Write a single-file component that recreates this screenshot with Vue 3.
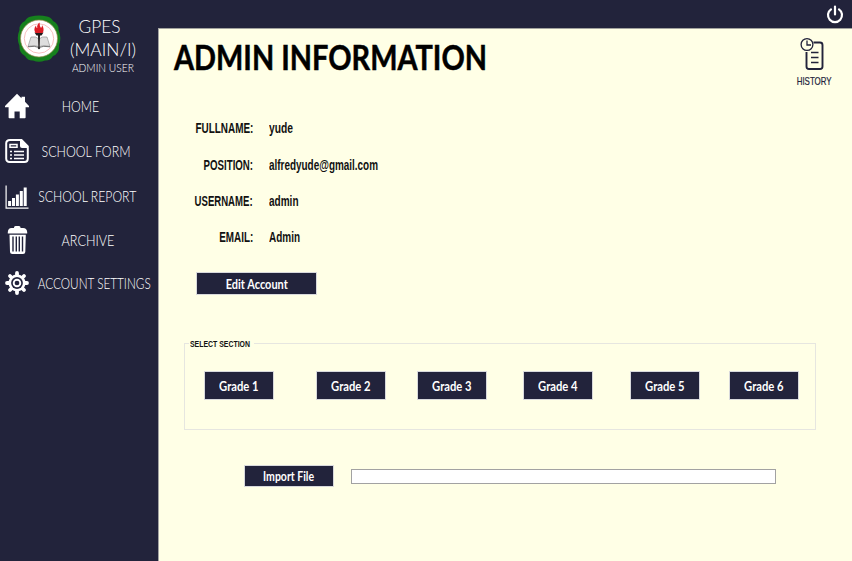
<script setup>
// Condenses or widens a label so that it fills the given width in pixels.
const vFit = {
  mounted(el, { value }) {
    const natural = el.getBoundingClientRect().width
    if (natural) el.style.transform = `scaleX(${value / natural})`
  }
}

const nav = [
  { id: 'home', label: 'HOME', width: 37.5 },
  { id: 'form', label: 'SCHOOL FORM', width: 89 },
  { id: 'report', label: 'SCHOOL REPORT', width: 98 },
  { id: 'archive', label: 'ARCHIVE', width: 53 },
  { id: 'settings', label: 'ACCOUNT SETTINGS', width: 113 }
]

const details = [
  { label: 'FULLNAME:', labelWidth: 58, value: 'yude', width: 24 },
  { label: 'POSITION:', labelWidth: 49.5, value: 'alfredyude@gmail.com', width: 109 },
  { label: 'USERNAME:', labelWidth: 58, value: 'admin', width: 29.5 },
  { label: 'EMAIL:', labelWidth: 34, value: 'Admin', width: 31 }
]

const grades = [1, 2, 3, 4, 5, 6]
</script>

<template>
  <div class="app">
    <aside class="sidebar">
      <header class="brand">
        <svg class="seal" viewBox="0 0 44 48">
          <path fill="#16801d" d="M14 1.500Q22-.5 30 1.500Q34 2 36 6Q42 9 41.500 15Q45 23 42 30Q43 38 36 41Q33 46 28 45.500Q22 48 16 45.500Q11 46 8 41Q2 38 2.500 31Q-1 23 2.500 15Q2 9 8 6Q10 2 14 1.500Z" />
          <circle cx="22" cy="23.500" r="18.500" fill="#fff" stroke="#9a8a4c" stroke-width=".7" />
          <circle cx="22" cy="23.500" r="14.700" fill="none" stroke="#f3a3a3" stroke-width=".7" />
          <path fill="#dedede" stroke="#777" stroke-width=".5" d="M14 22Q19 21 22 24Q25 21 30 22L33 31.500Q26 29.500 22 32Q18 29.500 11 31.500Z" />
          <path stroke="#555" stroke-width=".8" d="M11 31.800Q18 30.500 22 32.500Q26 30.500 33 31.800" fill="none" />
          <path fill="#211d1d" d="M17.500 17.500H26.500L24.500 20.500H23L22.600 33.500H21.400L21 20.500H19.500Z" />
          <path fill="#dc1d24" d="M18.500 18Q16 14 19 10.500Q19 13 20.300 13Q19.500 10 22.500 7.500Q22.500 11 24 13Q25.200 12 25 10Q28 14.500 25.500 18Z" />
          <circle cx="22" cy="33" r="1.200" fill="#333" />
        </svg>
        <div class="brand-text">
          <span v-fit="42" class="fit brand-name brand-short">GPES</span>
          <span v-fit="66" class="fit brand-name">(MAIN/I)</span>
          <span v-fit="62" class="fit brand-role">ADMIN USER</span>
        </div>
      </header>

      <nav class="nav">
        <a v-for="item in nav" :key="item.id" class="nav-item">
          <svg v-if="item.id === 'home'" class="nav-icon" viewBox="0 0 24 28" fill="#fff">
            <path d="M12 1.800L16.500 6.200V4.800H20V9.700L24 14V15.200H20.600V25.500Q20.600 26.300 19.800 26.300H14.700V19.500H9.500V26.300H4.400Q3.600 26.300 3.600 25.500V15.200H0V14Z" />
          </svg>
          <svg v-else-if="item.id === 'form'" class="nav-icon" viewBox="0 0 24 28" fill="none" stroke="#fff">
            <path stroke-width="2" d="M5 3H16.500L22.800 9.500V21.500Q22.800 25 19.300 25H4.700Q1.200 25 1.200 21.500V6.500Q1.200 3 5 3Z" />
            <path fill="#fff" stroke="none" d="M15 3H17L23 9V11H17Q15 11 15 9Z" />
            <path stroke-width="1.500" d="M5 10.300V7.500H12V10.300ZM9 14.500H19M9 18H19M9 21.500H19M5 14.500H7M5 18H7M5 21.500H7" />
          </svg>
          <svg v-else-if="item.id === 'report'" class="nav-icon" viewBox="0 0 24 28" fill="#fff">
            <path d="M.5 2.500H1.700V24.500H23.500V25.700H.5Z" />
            <path d="M3.100 18H6.100V23H3.100ZM7 15H10V23H7ZM10.900 11.500H13.900V23H10.900ZM14.800 8H17.800V23H14.800ZM18.700 4.500H21.700V23H18.700Z" />
          </svg>
          <svg v-else-if="item.id === 'archive'" class="nav-icon" viewBox="0 0 24 28" fill="#fff">
            <path d="M9 2V1.500Q9 0 10.500 0H14Q15.500 0 15.500 1.500V2H18Q21.800 2 22.200 6V7.500H2.800V6Q3.200 2 6.500 2Z" />
            <path fill-rule="evenodd" d="M4.500 8.700H20.800L20.300 26Q20.200 28 18 28H7.300Q5.200 28 5 26ZM7.300 10.500V25.500H8.700V10.500ZM10.600 10.500V25.500H12V10.500ZM13.600 10.500V25.500H15V10.500ZM16.800 10.500V25.500H18.200V10.500Z" />
          </svg>
          <svg v-else class="nav-icon" viewBox="0 0 24 28">
            <g stroke="#fff" stroke-width="3.800" stroke-linecap="round">
              <path d="M12 4V24M2 14H22M5 7L19 21M19 7L5 21" />
            </g>
            <circle cx="12" cy="14" r="8.500" fill="#fff" />
            <circle cx="12" cy="14" r="5.900" fill="#22233b" />
            <circle cx="12" cy="14" r="3.300" fill="none" stroke="#fff" stroke-width="1.900" />
          </svg>
          <span class="nav-label" :class="'nav-label-' + item.id">
            <span v-fit="item.width" class="fit">{{ item.label }}</span>
          </span>
        </a>
      </nav>
    </aside>

    <div class="content">
      <div class="topbar">
        <svg class="power" viewBox="0 0 18 20" fill="none" stroke="#fff" stroke-width="2.200" stroke-linecap="round">
          <path d="M9 1.500V9.500M5 4.300A7 7 0 1 0 13 4.300" />
        </svg>
      </div>

      <main class="main">
        <div class="heading">
          <h1 v-fit="313" class="fit title">ADMIN INFORMATION</h1>
          <button class="history">
            <svg class="history-icon" viewBox="0 0 24 34" fill="none" stroke="#22233b">
              <path stroke-width="1.900" d="M13.500 5.500H20Q22.500 5.500 22.500 8V29.500Q22.500 32 20 32H9Q6.500 32 6.500 29.500V15" />
              <circle cx="7" cy="7.500" r="5.900" stroke-width="1.300" />
              <path stroke-width="1.300" d="M7 3.500V8H11M11 15.500H18.500M11 20.500H18.500M11 25.500H18.500" />
            </svg>
            <span v-fit="35" class="fit">HISTORY</span>
          </button>
        </div>

        <dl class="details">
          <template v-for="row in details" :key="row.label">
            <dt><span v-fit="row.labelWidth" class="fit fit-right">{{ row.label }}</span></dt>
            <dd><span v-fit="row.width" class="fit fit-left">{{ row.value }}</span></dd>
          </template>
        </dl>

        <button class="btn btn-edit"><span v-fit="62" class="fit">Edit Account</span></button>

        <section class="sections">
          <h2 class="legend"><span v-fit="60" class="fit fit-left">SELECT SECTION</span></h2>
          <div class="grades">
            <button v-for="grade in grades" :key="grade" class="btn">
              <span v-fit="39.5" class="fit">Grade {{ grade }}</span>
            </button>
          </div>
        </section>

        <div class="import">
          <button class="btn btn-import"><span v-fit="51" class="fit">Import File</span></button>
          <input class="path" type="text" aria-label="File path" />
        </div>
      </main>
    </div>
  </div>
</template>

<style>
body {
  margin: 0;
  overflow: hidden;
}
</style>

<style scoped>
* {
  box-sizing: border-box;
}
.app {
  display: flex;
  width: 852px;
  height: 561px;
  background: #22233b;
  font-family: Lato, "Liberation Sans", sans-serif;
}
.fit {
  display: inline-block;
  flex: none;
  white-space: nowrap;
}
.fit-left {
  transform-origin: left;
}
.fit-right {
  transform-origin: right;
}
.sidebar {
  width: 158px;
  flex: none;
  color: #fff;
  font-weight: 300;
}
.brand {
  display: flex;
  height: 84px;
  padding: 15px 0 0 17px;
}
.seal {
  width: 44px;
  height: 48px;
}
.brand-text {
  display: flex;
  flex-direction: column;
  align-items: center;
  width: 84px;
}
.brand-name {
  height: 22.500px;
  font-size: 18.500px;
  line-height: 22.500px;
}
.brand-short {
  margin-right: 8px;
}
.brand-role {
  font-size: 12.500px;
  line-height: 15px;
}
.nav {
  display: grid;
  grid-template-rows: 44px 46px 45px 42px 44px;
}
.nav-item {
  display: flex;
  align-items: center;
  padding-left: 5px;
}
.nav-icon {
  width: 24px;
  height: 28px;
  flex: none;
}
.nav-label {
  display: flex;
  justify-content: center;
  width: 114px;
  padding-bottom: 1px;
  font-size: 14.800px;
  line-height: 20px;
}
.nav-label-home {
  margin-left: -5.500px;
}
.nav-label-report,
.nav-label-archive {
  margin-left: 1.500px;
}
.nav-label-settings {
  margin-left: 8px;
}
.content {
  display: flex;
  flex: 1;
  flex-direction: column;
}
.topbar {
  display: flex;
  justify-content: flex-end;
  height: 28px;
  padding: 5px 8px 0 0;
}
.power {
  width: 18px;
  height: 20px;
}
.main {
  flex: 1;
  border-top: 1px solid #a3a39f;
  border-left: 1px solid #a3a3a3;
  background: #ffffe6;
  color: #111;
}
.heading {
  display: flex;
  justify-content: space-between;
  height: 80px;
  padding: 8px 20px 0 15px;
}
.title {
  margin: -1px 0 0;
  color: #000;
  font-size: 35px;
  font-weight: 700;
  line-height: 40px;
  -webkit-text-stroke: 0.5px #000;
  transform-origin: left;
}
.history {
  display: flex;
  flex-direction: column;
  align-items: center;
  width: 36px;
  height: 51px;
  padding: 0;
  border: 0;
  background: none;
  color: #22233b;
  font: 10.500px/14px "Liberation Sans", sans-serif;
  -webkit-text-stroke: 0.2px #22233b;
}
.history-icon {
  width: 24px;
  height: 34px;
  flex: none;
  margin-bottom: 3px;
  margin-right: 4px;
}
.details {
  display: grid;
  grid-template-columns: 94px 1fr;
  grid-template-rows: 38px 36px 36px 36px;
  column-gap: 16px;
  align-items: center;
  margin: 0;
  font: bold 14.300px/18px "Liberation Sans", sans-serif;
}
.details dt {
  display: flex;
  justify-content: flex-end;
}
.details dd {
  display: flex;
  margin: 0;
}
.btn {
  display: flex;
  align-items: center;
  justify-content: center;
  width: 70px;
  height: 29px;
  padding: 0;
  border: 1px solid #d8d9dc;
  background: #22233b;
  color: #fff;
  font: bold 13px/16px Lato, "Liberation Sans", sans-serif;
}
.btn-edit {
  width: 121px;
  height: 23px;
  margin: 17px 0 0 37px;
}
.sections {
  width: 632px;
  height: 87px;
  margin: 48px 0 0 25px;
  border: 1px solid #e6e6e0;
}
.legend {
  width: 65px;
  height: 12px;
  margin: -6px 0 0 4px;
  padding-left: 1px;
  background: #ffffe6;
  font: bold 9.500px/12px "Liberation Sans", sans-serif;
}
.grades {
  display: grid;
  grid-template-columns: 112px 101px 106px 107px 99px 70px;
  padding: 21px 0 0 19px;
}
.import {
  display: flex;
  align-items: center;
  gap: 17px;
  margin: 35px 0 0 85px;
}
.btn-import {
  width: 90px;
  height: 22px;
}
.path {
  width: 425px;
  height: 15px;
  padding: 0 3px;
  border: 1px solid #a2a2a2;
  background: #fff;
}
</style>
